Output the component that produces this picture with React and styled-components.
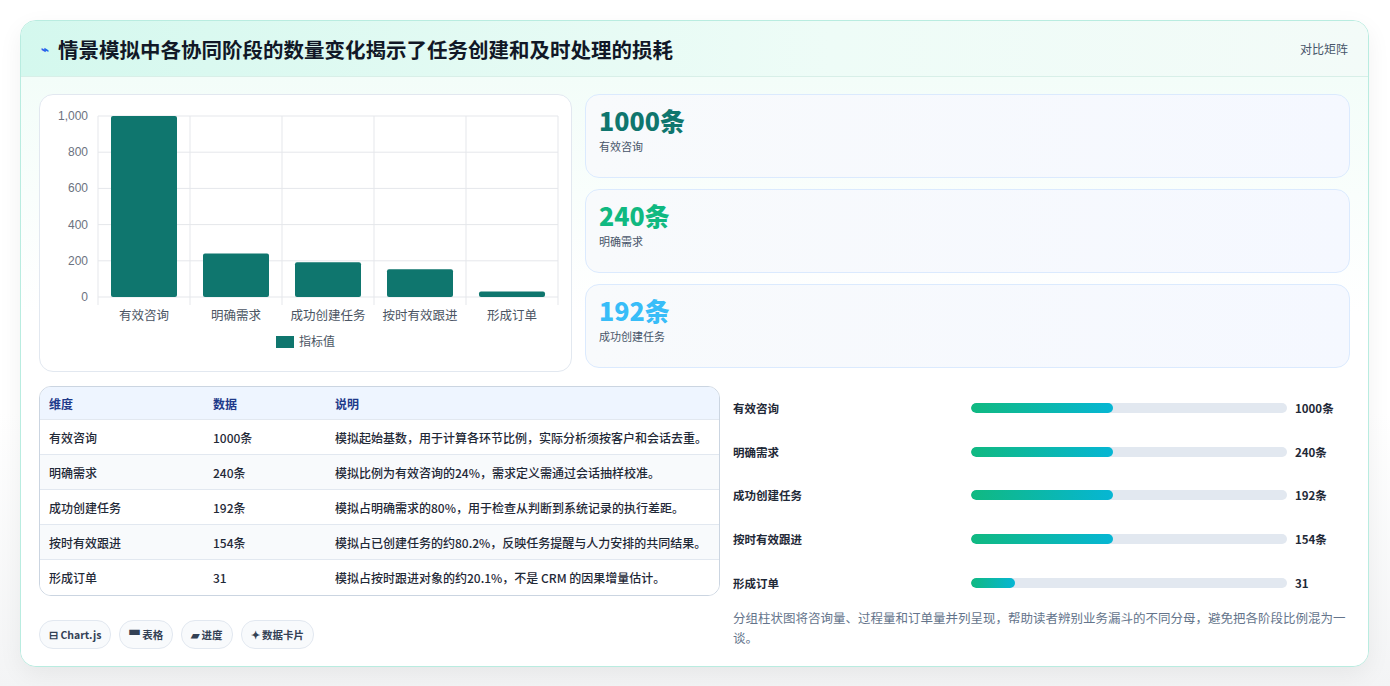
import React from "react";
import styled, { createGlobalStyle } from "styled-components";

const G = createGlobalStyle`
  body{margin:0;background:#fafafa;font-family:"Noto Sans CJK SC","Noto Sans",sans-serif;}
`;
const Page = styled.div`padding:20px 21px 21px 20px;background:linear-gradient(#fff 60%,#f3f4f5);`;
const Card = styled.div`
  border:1px solid #b9ece0;border-radius:16px;background:#fff;overflow:hidden;
  box-shadow:0 8px 24px rgba(0,0,0,0.06);
`;
const Header = styled.div`
  height:55px;display:flex;align-items:center;justify-content:space-between;padding:0 20px;
  background:linear-gradient(90deg,#d4f8ee,#eefcf7 60%,#f3fbf8);border-bottom:1px solid #d8efe8;
`;
const Title = styled.h1`margin:0;font-size:20.5px;font-weight:700;color:#111827;display:flex;align-items:center;gap:9px;`;
const Icon = styled.span`color:#2563eb;font-size:13px;`;
const Tag = styled.span`font-size:12px;color:#475569;`;
const Body = styled.div`
  padding:17px 18px 17px 18px;display:grid;grid-template-columns:533px 1fr;column-gap:13px;row-gap:14px;
  background:linear-gradient(180deg,#f3fdf9,#fff 40%);
`;
const Panel = styled.div`border:1px solid #e2e8f0;border-radius:14px;background:#fff;height:276px;position:relative;`;
const Stats = styled.div`display:flex;flex-direction:column;gap:11px;`;
const Stat = styled.div`
  height:84px;box-sizing:border-box;border:1px solid #dbeafe;border-radius:14px;padding:9px 13px;
  background:linear-gradient(90deg,#f8fafc,#f5f8ff);
`;
const Big = styled.div`font-size:25px;font-weight:800;color:${p=>p.c};line-height:32px;`;
const Small = styled.div`font-size:11px;color:#475569;margin-top:2px;`;
const Table = styled.div`border:1px solid #cbd5e1;border-radius:12px;overflow:hidden;width:681px;box-sizing:border-box;`;
const Row = styled.div`
  display:grid;grid-template-columns:164px 122px 1fr;height:${p=>p.h ? "33px":"35px"};box-sizing:border-box;align-items:center;padding-left:9px;
  font-size:12px;color:${p=>p.h?"#1e3a8a":"#1f2937"};font-weight:${p=>p.h?600:500};
  background:${p=>p.h?"#eef5ff":p.alt?"#f8fafc":"#fff"};
  border-bottom:${p=>p.last?"none":"1px solid #e2e8f0"};
`;
const Right = styled.div`padding-left:148px;display:flex;flex-direction:column;`;
const Bars = styled.div`display:flex;flex-direction:column;`;
const BarRow = styled.div`display:grid;grid-template-columns:230px 316px auto;align-items:center;height:43.7px;column-gap:8px;`;
const Lab = styled.span`font-size:11.5px;font-weight:600;color:#1f2937;`;
const Track = styled.div`height:10px;border-radius:5px;background:#e2e8f0;overflow:hidden;`;
const Fill = styled.div`height:100%;border-radius:5px;background:linear-gradient(90deg,#10b981,#06b6d4);`;
const Val = styled.span`font-size:11.5px;font-weight:700;color:#1f2937;`;
const Note = styled.p`margin:4px 0 0;font-size:12.5px;line-height:20px;color:#64748b;`;
const Chips = styled.div`display:flex;gap:8px;margin-top:24px;`;
const Chip = styled.span`border:1px solid #e2e8f0;border-radius:14px;padding:6px 9px;font-size:10.5px;font-weight:600;color:#334155;background:#f8fafc;`;

const data=[["有效咨询",1000,"1000条","模拟起始基数，用于计算各环节比例，实际分析须按客户和会话去重。",45],
["明确需求",240,"240条","模拟比例为有效咨询的24%，需求定义需通过会话抽样校准。",45],
["成功创建任务",192,"192条","模拟占明确需求的80%，用于检查从判断到系统记录的执行差距。",45],
["按时有效跟进",154,"154条","模拟占已创建任务的约80.2%，反映任务提醒与人力安排的共同结果。",45],
["形成订单",31,"31","模拟占按时跟进对象的约20.1%，不是 CRM 的因果增量估计。",14]];

function Chart(){
  const x0=58,x1=518,y0=21,y1=202,w=(x1-x0)/5;
  return <svg width="532" height="276" style={{display:"block"}}>
    {[0,200,400,600,800,1000].map(v=>{const y=y1-(y1-y0)*v/1000;return <g key={v}>
      <line x1={x0} x2={x1} y1={y} y2={y} stroke="#e5e7eb"/>
      <text x={x0-10} y={y+4} fontSize="12" textAnchor="end" fill="#6b7280" fontFamily="Liberation Sans">{v===1000?"1,000":v}</text></g>})}
    {[0,1,2,3,4,5].map(i=><line key={i} x1={x0+i*w} x2={x0+i*w} y1={y0} y2={y1+8} stroke="#e5e7eb"/>)}
    {data.map((d,i)=>{const h=(y1-y0)*d[1]/1000;return <g key={i}>
      <rect x={x0+i*w+13} y={y1-h} width={w-26} height={h} rx="2" fill="#0f766e"/>
      <text x={x0+i*w+w/2} y={y1+23} fontSize="12.5" textAnchor="middle" fill="#4b5563">{d[0]}</text></g>})}
    <rect x="236" y="241" width="18" height="12" fill="#0f766e"/>
    <text x="259" y="251" fontSize="12" fill="#4b5563">指标值</text>
  </svg>;
}

export default function App(){
  return <><G/><Page><Card>
    <Header><Title><Icon>⌁</Icon>情景模拟中各协同阶段的数量变化揭示了任务创建和及时处理的损耗</Title><Tag>对比矩阵</Tag></Header>
    <Body>
      <Panel><Chart/></Panel>
      <Stats>
        <Stat><Big c="#0f766e">1000条</Big><Small>有效咨询</Small></Stat>
        <Stat><Big c="#10b981">240条</Big><Small>明确需求</Small></Stat>
        <Stat><Big c="#38bdf8">192条</Big><Small>成功创建任务</Small></Stat>
      </Stats>
      <div style={{width:0}}>
        <Table>
          <Row h><span>维度</span><span>数据</span><span>说明</span></Row>
          {data.map((d,i)=><Row key={i} alt={i%2===1} last={i===4}><span>{d[0]}</span><span>{d[2]}</span><span>{d[3]}</span></Row>)}
        </Table>
        <Chips style={{width:400}}><Chip>⊟ Chart.js</Chip><Chip>▀ 表格</Chip><Chip>▰ 进度</Chip><Chip>✦ 数据卡片</Chip></Chips>
      </div>
      <Right>
        <Bars>{data.map((d,i)=><BarRow key={i}><Lab>{d[0]}</Lab><Track><Fill style={{width:d[4]+"%"}}/></Track><Val>{d[2]}</Val></BarRow>)}</Bars>
        <Note>分组柱状图将咨询量、过程量和订单量并列呈现，帮助读者辨别业务漏斗的不同分母，避免把各阶段比例混为一谈。</Note>
      </Right>
    </Body>
  </Card></Page></>;
}
